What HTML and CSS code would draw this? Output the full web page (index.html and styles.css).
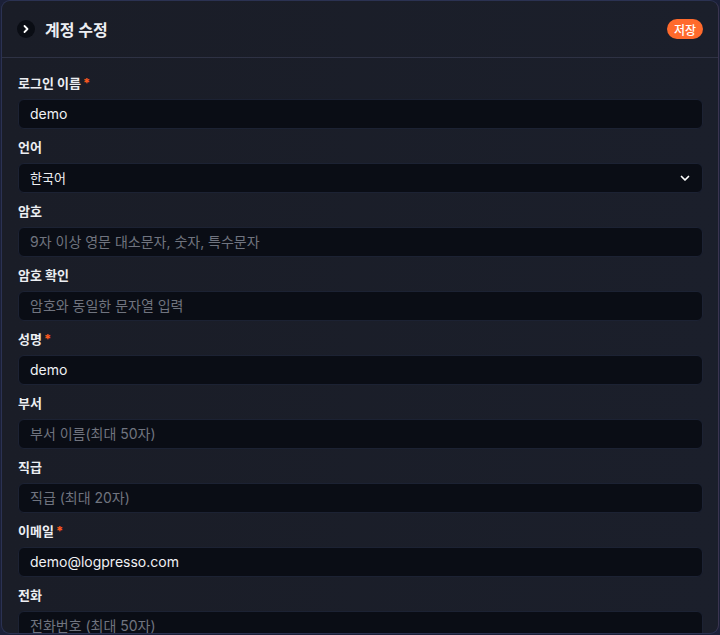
FILE: index.html
```html
<!DOCTYPE html>
<html lang="ko">
<head>
  <meta charset="UTF-8">
  <meta name="viewport" content="width=device-width, initial-scale=1.0">
  <title>계정 수정</title>
  <link rel="stylesheet" href="styles.css">
</head>
<body>
  <div class="panel">
    <div class="panel-header">
      <span class="toggle">
        <svg width="10" height="10" viewBox="0 0 10 10" fill="none">
          <path d="M3.5 2L6.5 5L3.5 8" stroke="white" stroke-width="1.8" stroke-linecap="round" stroke-linejoin="round"/>
        </svg>
      </span>
      <h1>계정 수정</h1>
      <button class="save-button">저장</button>
    </div>

    <form class="account-form">
      <div class="form-group">
        <label>로그인 이름<span class="required">*</span></label>
        <input type="text" value="demo">
      </div>
      <div class="form-group">
        <label>언어</label>
        <div class="select">
          <span>한국어</span>
          <svg width="12" height="12" viewBox="0 0 12 12" fill="none">
            <path d="M2.5 4.5L6 8L9.5 4.5" stroke="white" stroke-width="1.7" stroke-linecap="round" stroke-linejoin="round"/>
          </svg>
        </div>
      </div>
      <div class="form-group">
        <label>암호</label>
        <input type="password" placeholder="9자 이상 영문 대소문자, 숫자, 특수문자">
      </div>
      <div class="form-group">
        <label>암호 확인</label>
        <input type="password" placeholder="암호와 동일한 문자열 입력">
      </div>
      <div class="form-group">
        <label>성명<span class="required">*</span></label>
        <input type="text" value="demo">
      </div>
      <div class="form-group">
        <label>부서</label>
        <input type="text" placeholder="부서 이름(최대 50자)">
      </div>
      <div class="form-group">
        <label>직급</label>
        <input type="text" placeholder="직급 (최대 20자)">
      </div>
      <div class="form-group">
        <label>이메일<span class="required">*</span></label>
        <input type="text" value="demo@logpresso.com">
      </div>
      <div class="form-group">
        <label>전화</label>
        <input type="text" placeholder="전화번호 (최대 50자)">
      </div>
    </form>
  </div>
</body>
</html>
```

FILE: styles.css
```css
html, body {
  margin: 0;
  padding: 0;
  height: 100%;
  overflow: hidden;
}
body {
  font-family: Inter, "Noto Sans CJK KR", sans-serif;
  background: #1b2038;
  padding: 0 1px;
  box-sizing: border-box;
}
.panel {
  width: 718px;
  height: 634px;
  box-sizing: border-box;
  background: linear-gradient(to right, #1a1d27, #1b1f2b);
  border: 1px solid #2b3252;
  border-right-color: #3a3550;
  border-radius: 9px;
  overflow: hidden;
}
.panel-header {
  display: flex;
  align-items: center;
  height: 56px;
  padding: 0 15px 0 15px;
  border-bottom: 1px solid #2e3244;
}
.toggle {
  width: 18px;
  height: 18px;
  border-radius: 50%;
  background: #0a0d14;
  display: flex;
  align-items: center;
  justify-content: center;
  margin-right: 10px;
}
h1 {
  flex: 1;
  margin: 0;
  font-size: 16px;
  font-weight: 700;
  color: #eceef2;
}
.save-button {
  background: #ff6a2c;
  color: white;
  border: none;
  border-radius: 10px;
  height: 20px;
  padding: 0 7px;
  font-family: inherit;
  font-size: 12px;
  font-weight: 500;
}
.account-form {
  padding: 16px 15px 0 16px;
  display: flex;
  flex-direction: column;
  gap: 9px;
}
.form-group {
  display: flex;
  flex-direction: column;
  gap: 7px;
}
label {
  font-size: 13px;
  font-weight: 700;
  line-height: 18px;
  color: #eceef2;
}
.required {
  color: #ff5a1f;
  margin-left: 2px;
}
input, .select {
  height: 30px;
  box-sizing: border-box;
  width: 100%;
  background: #0a0d15;
  border: 1px solid #1c2233;
  border-radius: 6px;
  padding: 0 11px 1px;
  font-family: inherit;
  font-size: 14px;
  color: #f0f1f4;
  outline: none;
}
input::placeholder {
  color: #70747f;
}
.select {
  display: flex;
  align-items: center;
  justify-content: space-between;
  font-size: 13px;
}
```
